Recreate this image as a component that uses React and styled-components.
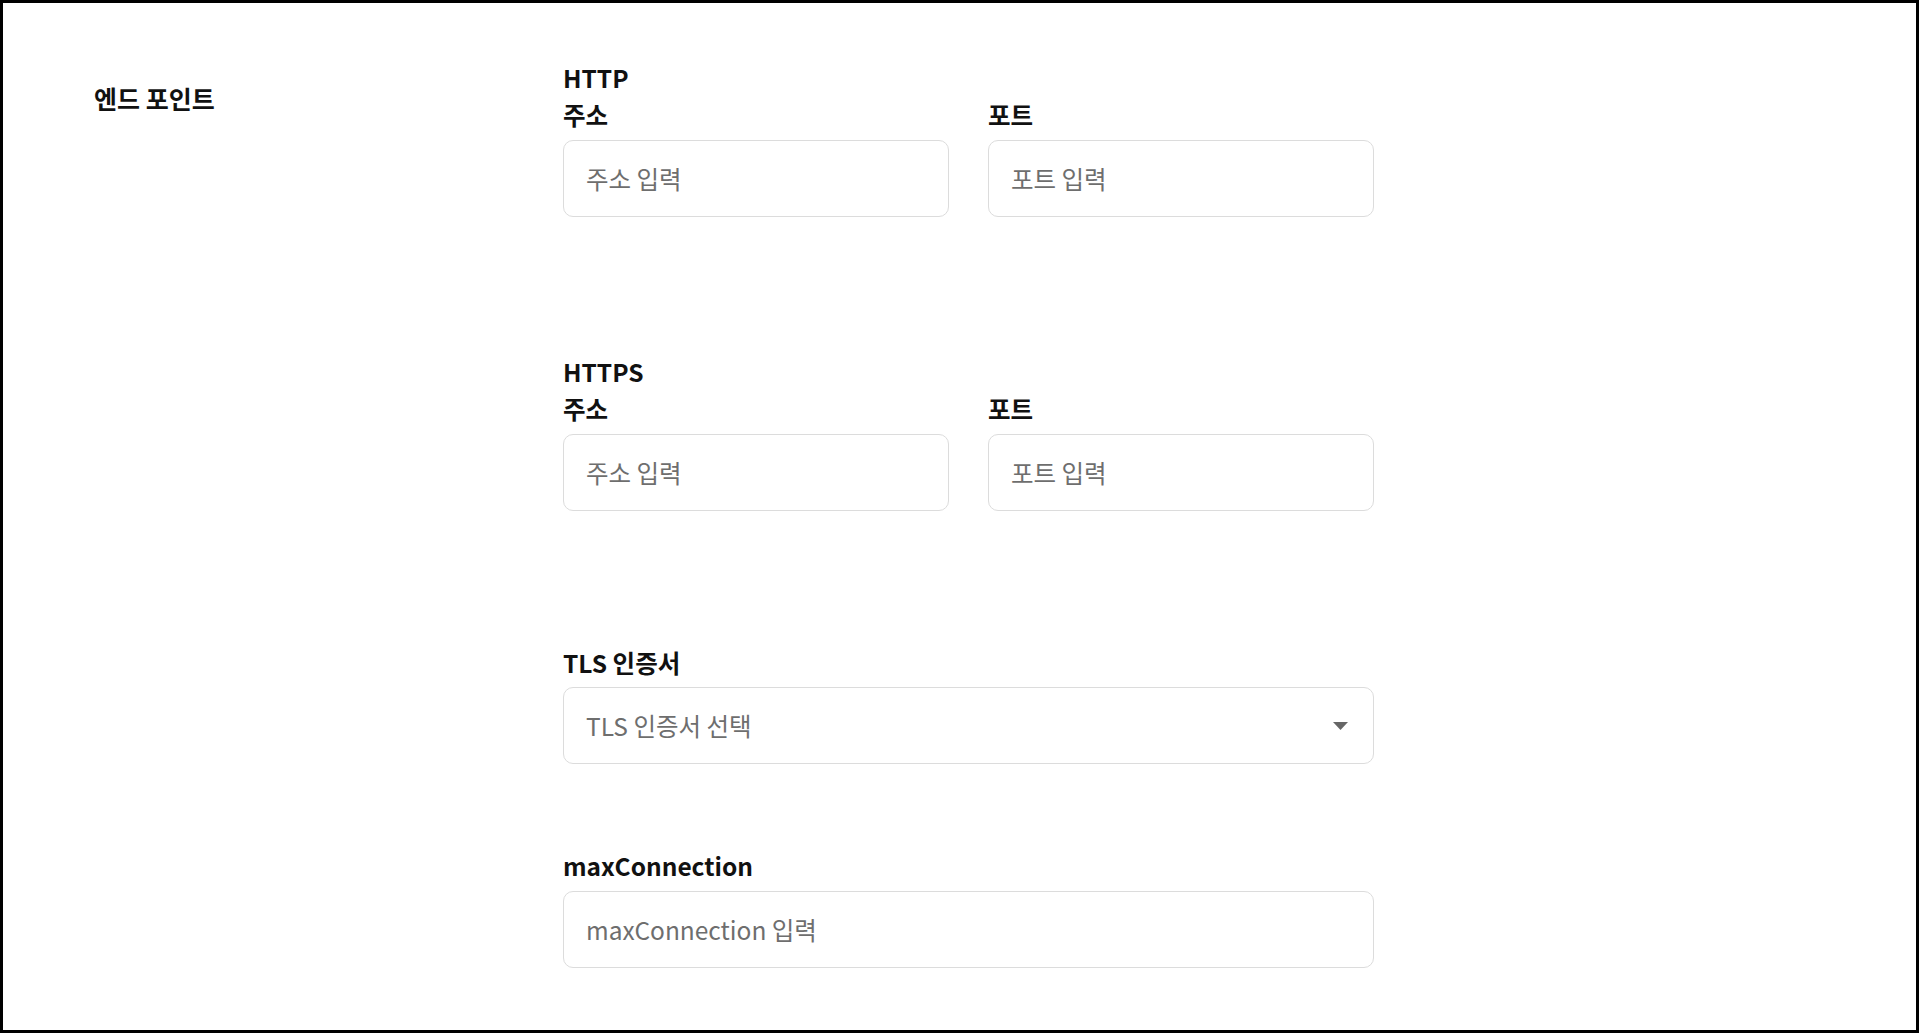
import React from 'react'
import styled, { createGlobalStyle } from 'styled-components'

const GlobalStyle = createGlobalStyle`
  html, body, #root {
    margin: 0;
    padding: 0;
    height: 100%;
  }
  body {
    background: #fff;
    font-family: "Noto Sans CJK KR", "Noto Sans", sans-serif;
  }
  * {
    box-sizing: border-box;
  }
`

const Page = styled.div`
  width: 100%;
  height: 100vh;
  border: 3px solid #000;
  background: #fff;
  display: grid;
  grid-template-columns: 469px 811px;
  align-content: start;
  padding: 56px 0 0 91px;
`

const SideTitle = styled.div`
  margin-top: 21px;
  font-size: 25px;
  line-height: 37px;
  font-weight: 700;
  color: #111;
`

const Form = styled.div`
  display: flex;
  flex-direction: column;
`

const Section = styled.section`
  display: flex;
  flex-direction: column;
  margin-top: ${(props) => props.$space || 0}px;
`

const Heading = styled.div`
  font-size: 24.5px;
  line-height: 37px;
  font-weight: 700;
  color: #111;
`

const Row = styled.div`
  display: grid;
  grid-template-columns: 386px 386px;
  column-gap: 39px;
`

const Field = styled.div`
  display: flex;
  flex-direction: column;
`

const Label = styled.label`
  font-size: 24.5px;
  line-height: 37px;
  font-weight: 700;
  color: #111;
`

const Input = styled.input`
  margin-top: 7px;
  width: 100%;
  height: 77px;
  border: 1px solid #dcdcdc;
  border-radius: 10px;
  padding: 0 22px;
  font-family: inherit;
  font-size: 24.5px;
  color: #222;
  background: #fff;
  outline: none;

  &::placeholder {
    color: #6e6e6e;
  }
`

const SelectBox = styled.div`
  margin-top: 6px;
  width: 100%;
  height: 77px;
  border: 1px solid #dcdcdc;
  border-radius: 10px;
  padding: 0 25px 0 22px;
  display: flex;
  align-items: center;
  justify-content: space-between;
  font-size: 24.5px;
  color: #6e6e6e;
  cursor: pointer;
`

const Caret = () => (
  <svg width="15" height="8" viewBox="0 0 15 8">
    <path d="M0 0 H15 L7.5 8 Z" fill="#666" />
  </svg>
)

const PairSection = ({ title, space }) => (
  <Section $space={space}>
    <Heading>{title}</Heading>
    <Row>
      <Field>
        <Label>주소</Label>
        <Input placeholder="주소 입력" />
      </Field>
      <Field>
        <Label>포트</Label>
        <Input placeholder="포트 입력" />
      </Field>
    </Row>
  </Section>
)

export default function App() {
  return (
    <>
      <GlobalStyle />
      <Page>
        <SideTitle>엔드 포인트</SideTitle>
        <Form>
          <PairSection title="HTTP" />
          <PairSection title="HTTPS" space={136} />
          <Section $space={133}>
            <Label>TLS 인증서</Label>
            <SelectBox>
              <span>TLS 인증서 선택</span>
              <Caret />
            </SelectBox>
          </Section>
          <Section $space={83}>
            <Label>maxConnection</Label>
            <Input placeholder="maxConnection 입력" />
          </Section>
        </Form>
      </Page>
    </>
  )
}
